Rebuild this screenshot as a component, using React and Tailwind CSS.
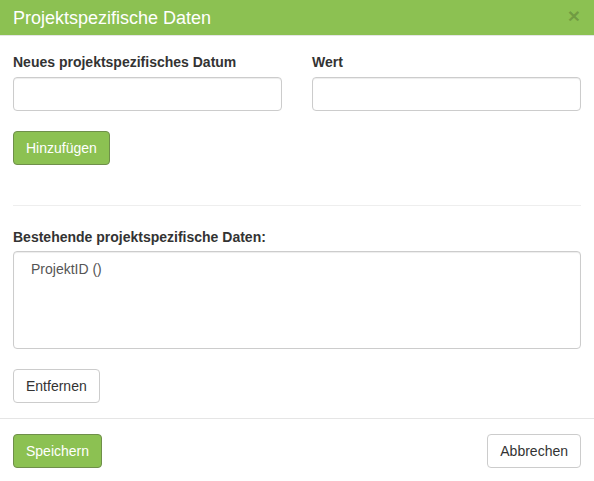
import React from "react";

const font = { fontFamily: '"Liberation Sans", Arial, sans-serif' };

export default function App() {
  return (
    <div
      className="w-[594px] h-[481px] bg-white text-[#333] text-[14px] leading-[20px] flex flex-col"
      style={font}
    >
      {/* Header */}
      <div className="h-[36px] bg-[#8cc152] flex items-center justify-between pl-[13px] pr-[14px] border-b border-[#e5e5e5]">
        <h4 className="text-white text-[18px] leading-[20px]">Projektspezifische Daten</h4>
        <button className="text-[#000]/20 text-[21px] font-bold leading-none -mt-[4px]">×</button>
      </div>

      {/* Body */}
      <div className="px-[13px] pt-[15px]">
        <div className="grid grid-cols-2 gap-[30px]">
          <div>
            <label className="block font-bold mb-[5px] mt-[1px]">Neues projektspezifisches Datum</label>
            <input className="w-full h-[34px] border border-[#ccc] rounded-[4px] shadow-[inset_0_1px_1px_rgba(0,0,0,0.075)]" />
          </div>
          <div>
            <label className="block font-bold mb-[5px] mt-[1px]">Wert</label>
            <input className="w-full h-[34px] border border-[#ccc] rounded-[4px] shadow-[inset_0_1px_1px_rgba(0,0,0,0.075)]" />
          </div>
        </div>
        <button className="mt-[20px] h-[34px] px-[12px] bg-[#8cc152] border border-[#6f8f4a] rounded-[4px] text-white">
          Hinzufügen
        </button>
        <div className="mt-[40px] border-t border-[#eee]" />
        <label className="block font-bold mt-[21px] mb-[4px]">Bestehende projektspezifische Daten:</label>
        <div className="h-[98px] border border-[#ccc] rounded-[4px] pl-[17px] pt-[7px] text-[#555] shadow-[inset_0_1px_1px_rgba(0,0,0,0.075)]">
          ProjektID ()
        </div>
        <button className="mt-[20px] h-[34px] px-[12px] bg-white border border-[#ccc] rounded-[4px] text-[#333]">
          Entfernen
        </button>
      </div>

      {/* Footer */}
      <div className="mt-[15px] border-t border-[#e5e5e5] px-[13px] pt-[15px] flex justify-between">
        <button className="h-[34px] px-[12px] bg-[#8cc152] border border-[#6f8f4a] rounded-[4px] text-white">
          Speichern
        </button>
        <button className="h-[34px] px-[12px] bg-white border border-[#ccc] rounded-[4px] text-[#333]">
          Abbrechen
        </button>
      </div>
    </div>
  );
}
